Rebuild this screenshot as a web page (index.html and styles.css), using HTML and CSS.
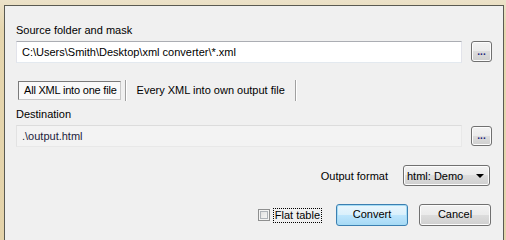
FILE: index.html
```html
<!DOCTYPE html>
<html>
<head>
<meta charset="utf-8">
<link rel="stylesheet" href="styles.css">
</head>
<body>
<div class="frame">
  <div class="label first">Source folder and mask</div>
  <div class="row">
    <div class="input">C:\Users\Smith\Desktop\xml converter\*.xml</div>
    <div class="btn browse">...</div>
  </div>
  <div class="tabs">
    <div class="tab active">All XML into one file</div>
    <div class="sep"></div>
    <div class="tab">Every XML into own output file</div>
    <div class="sep"></div>
  </div>
  <div class="label dest">Destination</div>
  <div class="row">
    <div class="input ro">.\output.html</div>
    <div class="btn browse b2">...</div>
  </div>
  <div class="format">
    <span class="flabel">Output format</span>
    <div class="select"><span>html: Demo</span><span class="arrow"></span></div>
  </div>
  <div class="bottom">
    <div class="check"><span class="box"></span><span class="focus">Flat table</span></div>
    <div class="btn push default">Convert</div>
    <div class="btn push">Cancel</div>
  </div>
</div>
</body>
</html>
```
FILE: styles.css
```css
html, body { margin: 0; padding: 0; }
body {
  width: 506px; height: 240px; overflow: hidden;
  background: linear-gradient(#ece2c9, #e6d6ae 30px, #e4d3aa);
  font-family: "Liberation Sans", Arial, sans-serif;
  font-size: 11px; color: #000;
}
.frame {
  margin: 5px 2px 0 4px;
  height: 240px;
  box-sizing: border-box;
  border: 1px solid #5a5a52; border-bottom: none;
  background: #f0f0f0;
  padding: 0 11px;
  display: flex; flex-direction: column;
}
.label { height: 13px; line-height: 13px; }
.first { margin-top: 18px; }
.dest { margin-top: 7px; }
.row { display: flex; align-items: flex-start; margin-top: 4px; }
.input {
  flex: 1; height: 22px; box-sizing: border-box;
  margin-right: 9px;
  background: #fff;
  border: 1px solid #e2e3ea; border-top-color: #abadb3; border-bottom-color: #e3e9ef;
  padding: 0 5px; line-height: 20px;
  white-space: nowrap;
}
.input.ro { background: #f3f3f3; border-color: #dcdcdc #e8e8e8 #e8e8e8 #e2e2e2; color: #1c1c3c; }
.btn {
  box-sizing: border-box;
  border: 1px solid #707070; border-radius: 3px;
  background: linear-gradient(#f2f2f2, #ebebeb 50%, #dddddd 50%, #cfcfcf);
  box-shadow: inset 0 0 0 1px #fcfcfc;
  text-align: center;
}
.browse {
  width: 21px; height: 21px; line-height: 19px;
  color: #23237a; font-weight: bold; font-size: 10px; letter-spacing: 0;
}
.b2 { margin-top: 1px; height: 20px; line-height: 18px; }
.tabs { display: flex; align-items: center; margin-top: 17px; height: 21px; padding-left: 2px; }
.tab { height: 19px; line-height: 17px; box-sizing: border-box; border: 1px solid transparent; white-space: nowrap; }
.tab.active {
  border: 1px solid #7a7a7a; border-right-color: #c8c8c8; border-bottom-color: #c8c8c8;
  background: #f9f9f9; padding: 0 3px 0 5px; letter-spacing: -0.2px;
}
.sep { width: 1px; height: 21px; background: #a0a0a0; box-shadow: 1px 0 0 #fff; margin-left: 4px; }
.tab:not(.active) { padding-left: 10px; padding-right: 5px; }
.format { display: flex; align-items: center; justify-content: flex-end; margin-top: 18px; padding-right: 2px; }
.flabel { margin-right: 15px; margin-top: 1px; }
.select {
  width: 87px; height: 21px; box-sizing: border-box;
  border: 1px solid #707070; border-radius: 3px;
  background: linear-gradient(#f2f2f2, #ebebeb 50%, #dddddd 50%, #cfcfcf);
  box-shadow: inset 0 0 0 1px #fcfcfc;
  display: flex; align-items: center; justify-content: space-between;
  padding: 0 5px 0 3px;
}
.arrow { width: 0; height: 0; border-left: 4px solid transparent; border-right: 4px solid transparent; border-top: 4px solid #000; margin-top: 1px; }
.bottom { display: flex; align-items: center; justify-content: flex-end; margin-top: 18px; padding-right: 1px; }
.check { display: flex; align-items: center; margin-right: 3px; }
.box {
  width: 12px; height: 12px; box-sizing: border-box;
  border: 1px solid #8e8f8f;
  background: linear-gradient(135deg, #dcdcdc, #fbfbfb);
  box-shadow: inset 0 0 0 1px #f4f4f4, inset 0 0 0 2px #aeb3b9;
  margin-right: 3px;
}
.focus { border: 1px dotted #000; padding: 0 1px; line-height: 13px; }
.push { width: 72px; height: 22px; line-height: 19px; margin-left: 11px; }
.default {
  border-color: #3c7fb1;
  background: linear-gradient(#eaf6fd, #d9f0fc 50%, #bee6fd 50%, #a7d9f5);
  box-shadow: inset 0 0 0 1px #a5dcf5;
}
```
